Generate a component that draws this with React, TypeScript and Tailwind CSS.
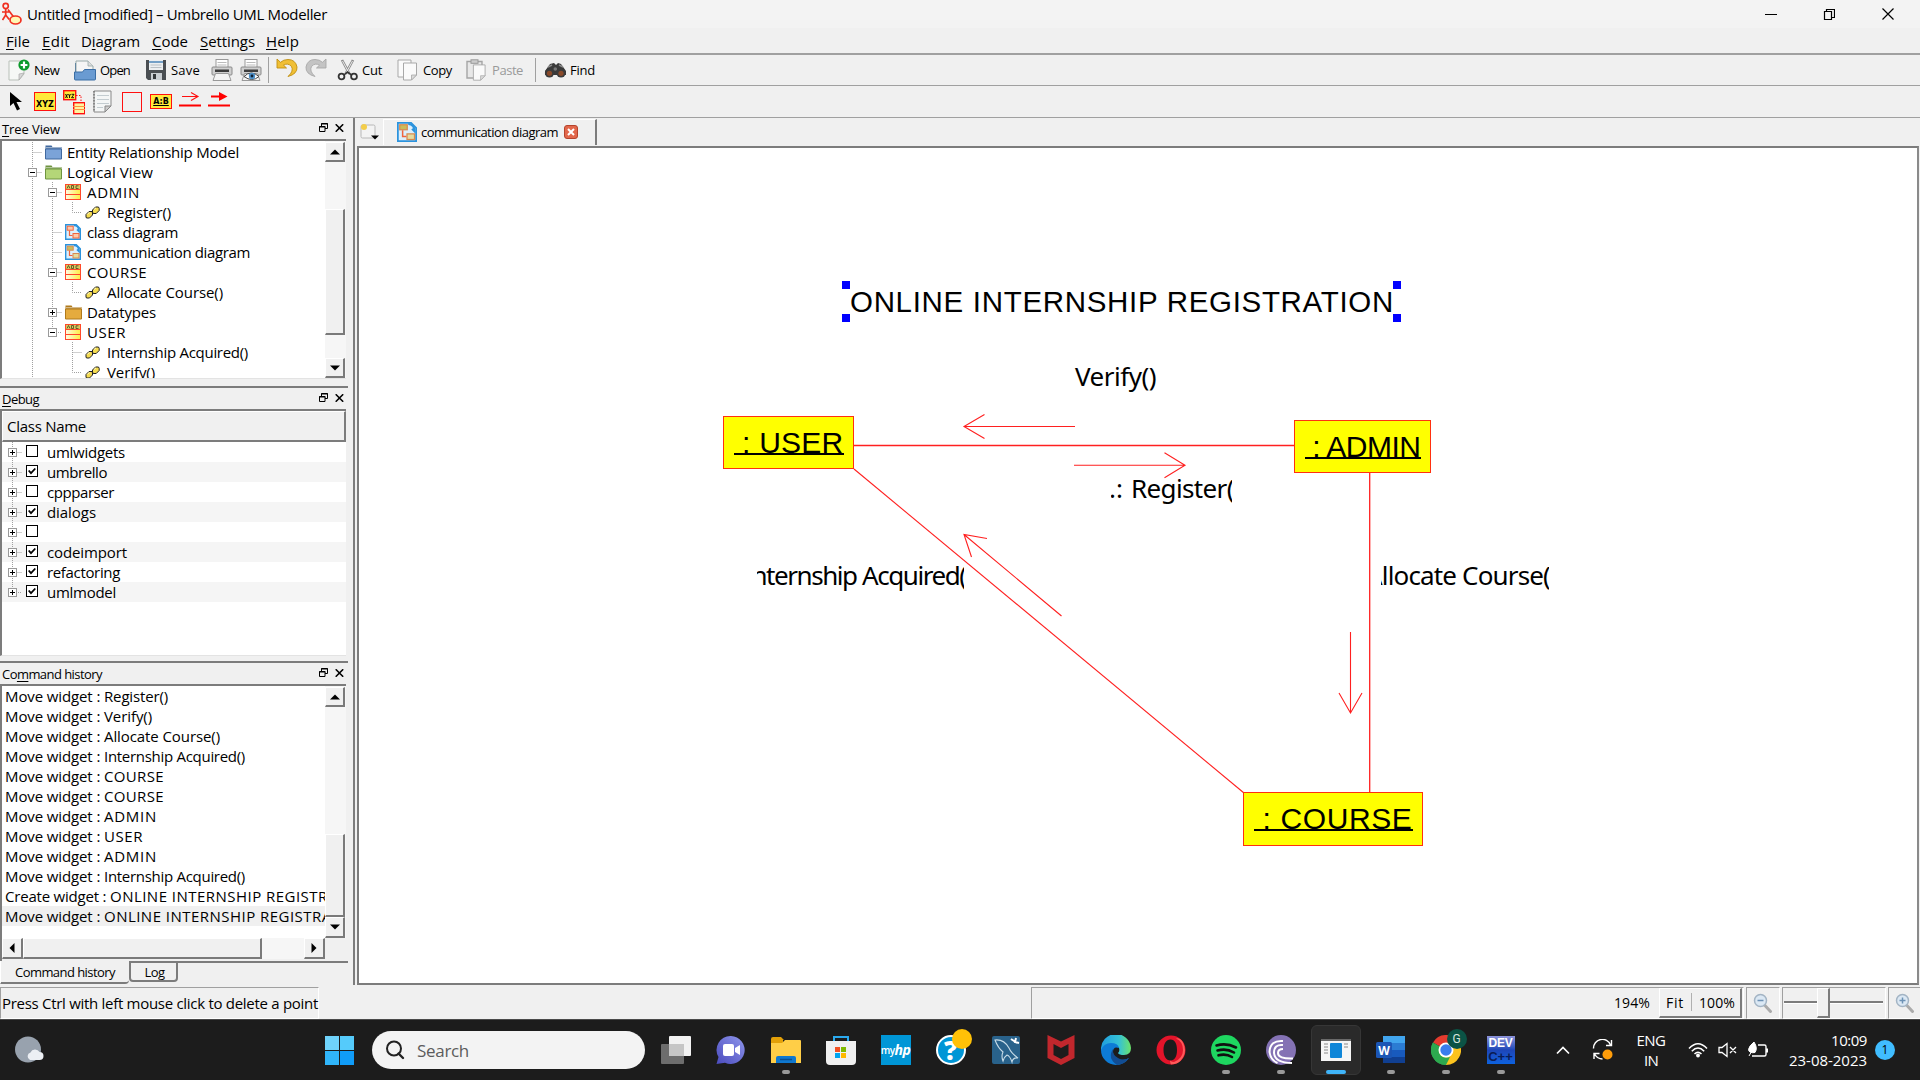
import React, { ReactNode, useLayoutEffect, useRef, useState } from "react";

/** Single-line text whose tracking is adjusted so it spans exactly `w` pixels. */
function Fit({ w, className = "", children }: { w: number; className?: string; children: ReactNode }) {
  const ref = useRef<HTMLSpanElement>(null);
  const [sp, setSp] = useState(0);
  useLayoutEffect(() => {
    const el = ref.current;
    if (!el) return;
    const n = (el.textContent || "").length;
    const natural = el.getBoundingClientRect().width;
    setSp((w - natural) / n);
  }, []);
  return (
    <span ref={ref} className={`inline-block whitespace-pre shrink-0 ${className}`} style={{ letterSpacing: sp }}>
      {children}
    </span>
  );
}

const U = ({ children }: { children: ReactNode }) => (
  <span className="underline decoration-1 underline-offset-2">{children}</span>
);

/* ---------- toolbar icons ---------- */
const Page = ({ x = 0, y = 0 }: { x?: number; y?: number }) => (
  <g transform={`translate(${x} ${y})`}>
    <path d="M1 1h13v12l-5 5H1z" fill="#fafafa" stroke="#a8a8a8" />
    <path d="M14 13H9v5z" fill="#dcdcdc" stroke="#a8a8a8" strokeWidth=".8" />
  </g>
);
const NewIcon = () => (
  <svg width="22" height="22" viewBox="0 0 22 22">
    <path d="M1 2h15v13l-5 6H1z" fill="#f6f8f6" stroke="#b9c0b9" />
    <path d="M16 14l-5 1v6z" fill="#d8d8d8" stroke="#aaa" strokeWidth=".7" />
    <circle cx="16" cy="6" r="5.600" fill="#0b9a2a" />
    <path d="M16 2.600v6.800M12.600 6h6.800" stroke="#fff" strokeWidth="2.200" />
  </svg>
);
const OpenIcon = () => (
  <svg width="22" height="22" viewBox="0 0 22 22">
    <path d="M1 4h5v14H1z" fill="#2f6296" />
    <path d="M2 2h12l5 5v9H2z" fill="#f5f5f5" stroke="#9aa" />
    <path d="M14 2v5h5" fill="#ddd" stroke="#9aa" strokeWidth=".8" />
    <path d="M.5 13h8l2-2.500h11V20a1 1 0 0 1-1 1H1.500a1 1 0 0 1-1-1z" fill="#6a9bd2" stroke="#3b6ea5" />
  </svg>
);
const SaveIcon = () => (
  <svg width="22" height="22" viewBox="0 0 22 22">
    <path d="M1 1h20v20H3l-2-2z" fill="#4a4e52" />
    <rect x="4" y="1" width="14" height="10" fill="#eceff1" />
    <path d="M4 3h14" stroke="#4d86b8" strokeWidth="1.500" />
    <path d="M5.500 6h11M5.500 8.500h11" stroke="#b9c0c5" />
    <rect x="6" y="14" width="11" height="7" fill="#c9ced2" />
    <rect x="8" y="15" width="3" height="5" fill="#33373a" />
  </svg>
);
const Printer = ({ eye = false }: { eye?: boolean }) => (
  <svg width="22" height="22" viewBox="0 0 22 22">
    <rect x="5" y=".5" width="12" height="9" fill="#fff" stroke="#999" />
    <path d="M6.500 3.500h9M6.500 6h9" stroke="#bbb" />
    <rect x="1" y="8" width="20" height="8" rx="1" fill="#cfcfcf" stroke="#8a8a8a" />
    <rect x="4" y="10.500" width="14" height="2.500" fill="#3d3d3d" />
    <path d="M4.500 14.500h13l2.500 7H2z" fill="#f4f4f4" stroke="#999" />
    {eye && (
      <g>
        <path d="M4 17.500q7-7 15 0q-7 6-15 0z" fill="#fff" stroke="#444" />
        <circle cx="12" cy="17" r="3.200" fill="#4b8fc9" />
        <circle cx="12" cy="17" r="1.400" fill="#123" />
      </g>
    )}
  </svg>
);
const Undo = ({ flip = false }: { flip?: boolean }) => (
  <svg width="22" height="22" viewBox="0 0 22 22" className={flip ? "-scale-x-100" : ""}>
    <path
      d="M1 2v9h9.500L7.500 8.200Q12 5.500 15.500 9.500Q18 14 12 19.500Q21.500 17 21 10Q19.500 2.500 12 2.500Q7.500 2.500 4.500 5.300z"
      fill={flip ? "#c4c4c4" : "#f0bf35"}
      stroke={flip ? "#a8a8a8" : "#bf8f10"}
      strokeWidth=".9"
    />
  </svg>
);
const CutIcon = () => (
  <svg width="22" height="22" viewBox="0 0 22 22">
    <path d="M5 1l7.500 14M16 1L8.500 15" stroke="#8b8b8b" strokeWidth="2.600" />
    <path d="M5.500 2l7 13M15.500 2l-7 13" stroke="#e8e8e8" strokeWidth="1" />
    <circle cx="4.500" cy="17.500" r="2.900" fill="none" stroke="#333" strokeWidth="1.800" />
    <circle cx="17" cy="17.500" r="2.900" fill="none" stroke="#333" strokeWidth="1.800" />
    <path d="M7 16l3.500-3 4 3" stroke="#333" strokeWidth="1.600" fill="none" />
  </svg>
);
const CopyIcon = () => (
  <svg width="22" height="22" viewBox="0 0 22 22">
    <Page />
    <Page x={5.5} y={3} />
  </svg>
);
const PasteIcon = () => (
  <svg width="22" height="22" viewBox="0 0 22 22">
    <path d="M1 2.500h15V19H1z" fill="#e8e8e8" stroke="#a5a5a5" strokeWidth="1.400" />
    <rect x="5" y=".8" width="7" height="3.500" fill="#ccc" stroke="#999" />
    <g transform="translate(6.500 5) scale(.9)">
      <Page />
    </g>
  </svg>
);
const FindIcon = () => (
  <svg width="23" height="20" viewBox="0 0 23 20">
    <path d="M6 4l4-1 2 2 2-2 3 1 5 7v4H1v-4z" fill="#3a3a3a" />
    <path d="M4 7l4-2M15 5l4 2" stroke="#8b8b8b" strokeWidth="1.500" />
    <circle cx="5.500" cy="13" r="4.600" fill="#3b3b3b" />
    <circle cx="5.500" cy="13.300" r="2.600" fill="#8a4a2a" />
    <circle cx="17" cy="13" r="4.600" fill="#3b3b3b" />
    <circle cx="17" cy="13.300" r="2.600" fill="#8a4a2a" />
    <circle cx="11.300" cy="9" r="1.800" fill="#777" />
  </svg>
);

/* ---------- tree icons ---------- */
const Folder = ({ c, d }: { c: string; d: string }) => (
  <svg width="17" height="16" viewBox="0 0 17 16" className="shrink-0">
    <path d="M.5 15V1.500h6l1 1.500h9V15z" fill={d} />
    <path d="M.5 5h16v10H.5z" fill={c} stroke={d} />
    <path d="M1 3.700h15" stroke="#fff" strokeOpacity=".6" />
  </svg>
);
const ClassIcon = () => (
  <svg width="16" height="16" viewBox="0 0 16 16" className="shrink-0">
    <defs>
      <linearGradient id="cls" x1="0" x2="1">
        <stop stopColor="#fffbe0" />
        <stop offset="1" stopColor="#fff048" />
      </linearGradient>
    </defs>
    <rect width="16" height="16" fill="#ff4a2a" />
    <rect x="1" y="1" width="14" height="4" fill="#d8c860" />
    <path d="M2 4.500l1.500-3 1.500 3M6.500 1.500v3h2v-3zM13.500 1.800h-2.500v2.700h2.500" fill="none" stroke="#4a4420" strokeWidth=".8" />
    <rect x="1" y="6" width="14" height="4" fill="url(#cls)" />
    <rect x="1" y="11" width="14" height="4" fill="url(#cls)" />
  </svg>
);
const DiagIcon = ({ s = 16, comm = false }: { s?: number; comm?: boolean }) => (
  <svg width={s} height={s} viewBox="0 0 16 16" className="shrink-0">
    <path d="M.7.7h10.600l4 4v10.600H.7z" fill="#dceffc" stroke="#2b93dd" strokeWidth="1.400" />
    <path d="M9 1.500q5 0 5 6l-2-2" fill="none" stroke="#2b93dd" strokeWidth="1.600" />
    <rect x="2.200" y="2.200" width="6" height="4" fill={comm ? "#c9bd5a" : "#ffc9a8"} stroke={comm ? "#d88a50" : "#f0643c"} />
    <rect x="8" y="9.500" width="6" height="4.500" fill={comm ? "#e4dca0" : "#ffc9a8"} stroke={comm ? "#d88a50" : "#f0643c"} />
    <path d="M4.500 6.500v5h3" fill="none" stroke="#f0643c" strokeWidth="1.200" />
  </svg>
);
const LinkIcon = () => (
  <svg width="15" height="13" viewBox="0 0 15 13" className="shrink-0">
    <path d="M1 8.500l3-3h3l.5 1.500v2l-3 3H1.500L1 11z" fill="#f5dc50" stroke="#222" strokeWidth="1" />
    <path d="M7.500 4l3-3h3l.7 1.500v2l-3 3h-3L7.500 6z" fill="#f5dc50" stroke="#222" strokeWidth="1" />
    <path d="M2.500 8l2-1.500M9 3.500l2-1.700" stroke="#fffbd0" />
  </svg>
);

const Expander = ({ plus = false }: { plus?: boolean }) => (
  <span className="z-10 flex h-[9px] w-[9px] shrink-0 items-center justify-center border border-[#9a9a9a] bg-white">
    <svg width="5" height="5" viewBox="0 0 5 5">
      <path d={plus ? "M0 2.500h5M2.500 0v5" : "M0 2.500h5"} stroke="#000" />
    </svg>
  </span>
);

type Row = { icon: string; t: string; w: number; ex?: string; guides: string[] };
const tree: Row[] = [
  { icon: "blue", t: "Entity Relationship Model", w: 172, guides: ["t"] },
  { icon: "green", t: "Logical View", w: 86, ex: "-", guides: ["t"] },
  { icon: "class", t: "ADMIN", w: 53, ex: "-", guides: ["v", "t"] },
  { icon: "link", t: "Register()", w: 64, guides: ["v", "v", "l"] },
  { icon: "diag", t: "class diagram", w: 91, guides: ["v", "t"] },
  { icon: "comm", t: "communication diagram", w: 163, guides: ["v", "t"] },
  { icon: "class", t: "COURSE", w: 60, ex: "-", guides: ["v", "t"] },
  { icon: "link", t: "Allocate Course()", w: 116, guides: ["v", "v", "l"] },
  { icon: "orange", t: "Datatypes", w: 69, ex: "+", guides: ["v", "t"] },
  { icon: "class", t: "USER", w: 39, ex: "-", guides: ["v", "l"] },
  { icon: "link", t: "Internship Acquired()", w: 141, guides: ["v", "", "t"] },
  { icon: "link", t: "Verify()", w: 48, guides: ["v", "", "l"] },
];

function Guide({ kind, ex }: { kind: string; ex?: string }) {
  return (
    <span className="relative flex h-5 w-5 shrink-0 items-center pl-1">
      {kind && (
        <svg width="20" height="20" viewBox="0 0 20 20" className="absolute top-0 left-0">
          <path
            d={kind === "v" ? "M8.500 0V20" : kind === "t" ? "M8.500 0V20M8.500 10.500H18" : "M8.500 0V10.500H18"}
            fill="none"
            stroke="#a0a0a0"
            strokeDasharray="1 1"
          />
        </svg>
      )}
      {ex && <Expander plus={ex === "+"} />}
    </span>
  );
}

function TreeIcon({ k }: { k: string }) {
  if (k === "blue") return <Folder c="#7ba3d8" d="#41699f" />;
  if (k === "green") return <Folder c="#b4d678" d="#6f9440" />;
  if (k === "orange") return <Folder c="#e5ab3e" d="#b07a1c" />;
  if (k === "class") return <ClassIcon />;
  if (k === "link") return <LinkIcon />;
  return <DiagIcon comm={k === "comm"} />;
}

const btn =
  "flex shrink-0 items-center justify-center bg-[#f0f0f0] border-t border-l border-t-white border-l-white border-r-2 border-b-2 border-r-[#7a7a7a] border-b-[#7a7a7a]";
const track = "bg-[#f6f6f6]";

const Tri = ({ d }: { d: string }) => (
  <svg width="10" height="10" viewBox="0 0 10 10">
    <path d={d} fill="#000" />
  </svg>
);
const UP = "M0 7.500h10L5 2.500z";
const DOWN = "M0 2.500h10L5 7.500z";
const LEFT = "M7.500 0v10l-5-5z";
const RIGHT = "M2.500 0v10l5-5z";

function DockTitle({ children, w }: { children: ReactNode; w: number }) {
  return (
    <div className="flex h-[21px] shrink-0 items-center pl-0.5 pr-[4px] text-[13px]">
      <Fit w={w}>{children}</Fit>
      <span className="grow" />
      <svg width="9" height="9" viewBox="0 0 9 9" className="mb-[2px] mr-[7px]">
        <path d="M2.500 3V.500h6v5H6M2 1h7M.5 3.500h5.500v5H.5zM0 4h6.500" fill="none" stroke="#000" />
      </svg>
      <svg width="9" height="8" viewBox="0 0 9 8" className="mb-[2px]">
        <path d="M.7.3l7.500 7.400M8.200.3L.7 7.700" stroke="#000" strokeWidth="1.600" />
      </svg>
    </div>
  );
}

const debugRows: [string, number, boolean][] = [
  ["umlwidgets", 78, false],
  ["umbrello", 60, true],
  ["cppparser", 67, false],
  ["dialogs", 49, true],
  ["", 0, false],
  ["codeimport", 80, true],
  ["refactoring", 73, true],
  ["umlmodel", 69, true],
];

const history: [string, number, string, number][] = [
  ["Move widget : ", 99, "Register()", 64],
  ["Move widget : ", 99, "Verify()", 48],
  ["Move widget : ", 99, "Allocate Course()", 116],
  ["Move widget : ", 99, "Internship Acquired()", 141],
  ["Move widget : ", 99, "COURSE", 60],
  ["Move widget : ", 99, "COURSE", 60],
  ["Move widget : ", 99, "ADMIN", 53],
  ["Move widget : ", 99, "USER", 39],
  ["Move widget : ", 99, "ADMIN", 53],
  ["Move widget : ", 99, "Internship Acquired()", 141],
  ["Create widget : ", 105, "ONLINE INTERNSHIP REGISTRATION", 265],
  ["Move widget : ", 99, "ONLINE INTERNSHIP REGISTRATION", 265],
];

function Sidebar() {
  return (
    <div className="flex h-[867px] w-[348px] shrink-0 flex-col">
      {/* Tree view */}
      <div className="flex h-[262px] shrink-0 flex-col">
        <DockTitle w={58}><U>T</U>ree View</DockTitle>
        <div className="mr-[2px] flex h-[240px] border-t-2 border-b border-l-2 border-t-[#7c7c7c] border-l-[#7c7c7c] border-b-[#e3e3e3] bg-white">
          <div className="h-[237px] grow overflow-hidden pt-px">
            {tree.map((r, i) => (
              <div key={i} className="flex h-5 items-center pl-[22px]">
                {r.guides.map((g, j) => (
                  <Guide key={j} kind={g} ex={j === r.guides.length - 1 ? r.ex : undefined} />
                ))}
                <span className="mr-[3px] flex w-[20px] shrink-0 items-center justify-start pl-px">
                  <TreeIcon k={r.icon} />
                </span>
                <Fit w={r.w}>{r.t}</Fit>
              </div>
            ))}
          </div>
          <div className={`flex w-[21px] shrink-0 flex-col pr-px pt-px ${track}`}>
            <span className={`${btn} h-[20px]`}><Tri d={UP} /></span>
            <span className="h-[47px]" />
            <span className={`${btn} h-[126px]`} />
            <span className="grow" />
            <span className={`${btn} h-[20px]`}><Tri d={DOWN} /></span>
          </div>
        </div>
      </div>
      <div className="mt-[6px] h-[2px] shrink-0 bg-[#7c7c7c]" />
      {/* Debug */}
      <div className="flex h-[268px] shrink-0 flex-col">
        <DockTitle w={37}><U>D</U>ebug</DockTitle>
        <div className="mr-[2px] flex grow flex-col border-t-2 border-l-2 border-b border-t-[#7c7c7c] border-l-[#7c7c7c] border-b-[#e3e3e3] bg-white">
          <div className="flex h-[31px] shrink-0 items-center border-t border-l border-r-2 border-b-2 border-t-white border-l-white border-r-[#7c7c7c] border-b-[#7c7c7c] bg-[#f0f0f0] pl-1">
            <Fit w={79}>Class Name</Fit>
          </div>
          {debugRows.map(([t, w, on], i) => (
            <div key={i} className={`flex h-5 shrink-0 items-center pl-[2px] ${i % 2 ? "bg-[#f5f5f5]" : ""}`}>
              <Guide kind={i === 7 ? "l" : "t"} ex="+" />
              <span className="mb-[2px] ml-[2px] mr-[9px] flex h-3 w-3 shrink-0 items-center justify-center border border-black bg-white">
                {on && (
                  <svg width="8" height="8" viewBox="0 0 8 8">
                    <path d="M.7 3.500l2.300 2.700L7.300 1.500" fill="none" stroke="#000" strokeWidth="1.800" />
                  </svg>
                )}
              </span>
              {t && <Fit w={w}>{t}</Fit>}
            </div>
          ))}
        </div>
      </div>
      <div className="mt-[5px] h-[2px] shrink-0 bg-[#7c7c7c]" />
      {/* Command history */}
      <div className="flex h-[298px] shrink-0 flex-col">
        <DockTitle w={100}>Co<U>m</U>mand history</DockTitle>
        <div className="mr-[2px] flex grow flex-col border-t-2 border-l-2 border-t-[#7c7c7c] border-l-[#7c7c7c] bg-white">
          <div className="flex h-[252px] shrink-0">
            <div className="w-[323px] shrink-0 overflow-hidden">
              {history.map(([p, pw, t, w], i) => (
                <div key={i} className={`flex h-5 items-center pl-[3px] ${i === 11 ? "bg-[#f0f0f0]" : ""}`}>
                  <Fit w={pw}>{p}</Fit>
                  <Fit w={w}>{t}</Fit>
                </div>
              ))}
            </div>
            <div className={`flex grow flex-col pt-px pr-px ${track}`}>
              <span className={`${btn} h-[20px]`}><Tri d={UP} /></span>
              <span className="grow" />
              <span className={`${btn} h-[83px]`} />
              <span className={`${btn} h-[21px]`}><Tri d={DOWN} /></span>
            </div>
          </div>
          <div className="flex h-[21px] shrink-0 bg-[#f0f0f0]">
            <div className={`flex w-[323px] ${track}`}>
              <span className={`${btn} w-[21px]`}><Tri d={LEFT} /></span>
              <span className={`${btn} w-[239px]`} />
              <span className="grow" />
              <span className={`${btn} w-[21px]`}><Tri d={RIGHT} /></span>
            </div>
          </div>
          <div className="h-px grow bg-[#f0f0f0]" />
        </div>
      </div>
      {/* Tabs */}
      <div className="flex h-[25px] shrink-0 items-start text-[13px]">
        <div className="flex h-[23px] w-[129px] items-center justify-center rounded-br-sm border-b-2 border-l border-b-[#7c7c7c] border-l-white">
          <Fit w={100}>Command history</Fit>
        </div>
        <div className="flex h-[21px] w-[49px] items-center justify-center rounded-b-sm border-2 border-[#7c7c7c] pl-[2px]">
          <Fit w={20}>Log</Fit>
        </div>
        <div className="h-[2px] grow bg-[#7c7c7c]" />
      </div>
    </div>
  );
}

function NodeBox({ className, label, w }: { className: string; label: string; w: number }) {
  return (
    <div className={`absolute flex justify-center border-[1.5px] border-[#ff3010] bg-[#ffff00] font-['Liberation_Sans'] text-[30px] ${className}`}>
      <span className="flex h-[38px] items-start border-b-2 border-black leading-[52px]">
        <Fit w={w}>{label}</Fit>
      </span>
    </div>
  );
}

function Handle({ className }: { className: string }) {
  return <span className={`absolute h-2 w-2 bg-[#0000ff] ${className}`} />;
}

/** Free canvas: widgets sit at their own diagram coordinates. */
function Canvas() {
  return (
    <div className="relative h-[835px] w-[1558px] overflow-hidden bg-white font-['Noto_Sans'] text-[26px] text-black">
      <svg viewBox="359 148 1559 835" width="1559" height="835" className="absolute top-0 left-0" fill="none" stroke="#ff2020" strokeWidth="1.100">
        <path d="M854 445.500H1294" strokeWidth="1.700" />
        <path d="M1075 426.500H964M984.500 414.500L964 426.500L984.500 438.500" />
        <path d="M1074 465.200H1185M1164.500 452.700L1185 465.200L1164.500 477.700" />
        <path d="M1369.700 472V793" strokeWidth="1.300" />
        <path d="M1350.500 632V713M1339 693L1350.500 713L1362 693" />
        <path d="M854 469L1244 793" />
        <path d="M1061.500 616L964 534.500M987 538.500L964 534.500L971.500 557" />
      </svg>
      <div className="absolute top-[132px] left-[491px] font-['Liberation_Sans'] text-[29.5px] leading-[44px]">
        <Fit w={544}>ONLINE INTERNSHIP REGISTRATION</Fit>
      </div>
      <Handle className="top-[133px] left-[483px]" />
      <Handle className="top-[133px] left-[1034px]" />
      <Handle className="top-[166px] left-[483px]" />
      <Handle className="top-[166px] left-[1034px]" />
      <div className="absolute top-[210px] left-[716px] leading-9"><Fit w={81}>Verify()</Fit></div>
      <div className="absolute top-[322px] left-[752px] flex w-[121px] overflow-hidden leading-9">
        <span className="-ml-[2px] w-[22px] shrink-0">.:</span>
        <Fit w={110}>Register()</Fit>
      </div>
      <div className="absolute top-[409px] left-[398px] flex w-[207px] overflow-hidden leading-9">
        <span className="-ml-[13px]"><Fit w={228}>Internship Acquired()</Fit></span>
      </div>
      <div className="absolute top-[409px] left-[1022px] flex w-[168px] overflow-hidden leading-9">
        <span className="-ml-[15px]"><Fit w={191}>Allocate Course()</Fit></span>
      </div>
      <NodeBox className="top-[268px] left-[364px] h-[53px] w-[131px]" label=" : USER" w={110} />
      <NodeBox className="top-[272px] left-[935px] h-[53px] w-[137px]" label=" : ADMIN" w={116} />
      <NodeBox className="top-[644px] left-[884px] h-[54px] w-[180px]" label=" : COURSE" w={159} />
    </div>
  );
}

/* ---------- taskbar ---------- */
const S = ({ children }: { children: ReactNode }) => (
  <svg width="30" height="30" viewBox="0 0 30 30">
    {children}
  </svg>
);
const apps: { el: ReactNode; run?: boolean; active?: boolean }[] = [
  { el: <S><rect x="8" y="1" width="22" height="20" rx="1" fill="#f2f2f2" /><rect y="9" width="23" height="20" rx="1" fill="#777" fillOpacity=".9" /><path d="M8 9h15v12H8z" fill="#c6c6c6" /></S> },
  { el: <S><defs><linearGradient id="ch" x1="0" x2="1" y1="1" y2="0"><stop stopColor="#4a4bbd" /><stop offset="1" stopColor="#8f96ec" /></linearGradient></defs><path d="M15 1a14 14 0 1 1-6 26.800L.5 29l2-7A14 14 0 0 1 15 1z" fill="url(#ch)" /><rect x="7" y="9" width="11" height="12" rx="2" fill="#fff" /><path d="M19 13l5-3v10l-5-3z" fill="#fff" /></S> },
  { el: <S><path d="M0 4a2 2 0 0 1 2-2h8l3 3h-1v6H0z" fill="#e3a008" /><path d="M0 8h11l3-3h15a1 1 0 0 1 1 1v22H0z" fill="#ffce47" /><path d="M5 28v-5a2 2 0 0 1 2-2h16a2 2 0 0 1 2 2v5z" fill="#0f78cf" /><path d="M9 24.500h12" stroke="#0a4f91" strokeWidth="1.500" /></S>, run: true },
  { el: <S><path d="M8 7V2h14v5" fill="none" stroke="#2aa9ee" strokeWidth="2" /><path d="M0 6h30v20a4 4 0 0 1-4 4H4a4 4 0 0 1-4-4z" fill="#f0f0f0" /><path d="M9 12h5v5H9z" fill="#f25022" /><path d="M15 12h5v5h-5z" fill="#7fba00" /><path d="M9 18h5v5H9z" fill="#00a4ef" /><path d="M15 18h5v5h-5z" fill="#ffb900" /></S> },
  { el: <div className="flex h-[30px] w-[30px] items-center justify-center bg-[#0096d6] font-['Open_Sans'] text-[10px] font-semibold tracking-tighter text-white"><span>my</span><span className="text-[14px] font-bold italic">hp</span></div> },
  { el: <div className="relative flex h-[30px] w-[30px] items-center justify-center rounded-full border-2 border-white bg-[#0096d6] font-['Open_Sans'] text-[26px] leading-none font-extrabold text-white">?<span className="absolute -top-[8px] -right-[8px] h-5 w-5 rounded-full bg-[#ffc107]" /></div> },
  { el: <S><rect x="1" y="1" width="28" height="28" rx="2" fill="#29628b" /><path d="M4 5q9-1 14 8 2 5 9 10-5-1-6 4-2-6-5-7-3 2-4 6-2-5 0-9-5-4-8-12z" fill="none" stroke="#c8dce8" strokeWidth="1.100" /><path d="M20 4l6 4M25 3l-1 4 4 1" stroke="#fff" strokeWidth="2" fill="none" /></S> },
  { el: <S><path d="M1.500 0L15 6.500 28.500 0v23L15 30 1.500 23zM7.500 9v11L15 24l7.500-4V9L15 13z" fill="#c1272d" fillRule="evenodd" /></S> },
  { el: <S><defs><linearGradient id="ed" x1="0" x2="1"><stop stopColor="#1f9de0" /><stop offset=".6" stopColor="#35c1d5" /><stop offset="1" stopColor="#6be36a" /></linearGradient></defs><path d="M0 15A15 15 0 0 1 30 13q0 7-7 7-5 0-6-2 2-2 1-5-3-5-9-3-6 1-9 6z" fill="url(#ed)" /><path d="M0 15q3-7 10-7 7 0 8 5-6-2-6 4 0 8 9 8 4 0 7-2-5 7-13 7A15 15 0 0 1 0 15z" fill="#0d7bd6" /><path d="M12 14q-6 9 4 16 8-1 12-7-6 3-11 0-6-3-5-9z" fill="#124d93" /></S> },
  { el: <S><path fillRule="evenodd" d="M15 .5a14.500 14.500 0 1 1 0 29 14.500 14.500 0 0 1 0-29zM14.500 4.500C10 4.500 7.500 9 7.500 15s2.500 10.500 7 10.500 6.500-4.500 6.500-10.500-2-10.500-6.500-10.500z" fill="#e3142a" /><path d="M15 29.500q8 0 12-7t0-15q-3-5-7-4 7 3 7 11.500T18 27q-2 0-4-1.500.5 4 1 4z" fill="#ff5a5a" /></S> },
  { el: <S><circle cx="15" cy="15" r="15" fill="#1ed760" /><path d="M5.500 10.500q10-3 19.500 2M6.500 15.500q9-2.500 16.500 2M7.500 20.300q7.500-2 13.500 1.700" fill="none" stroke="#101010" strokeWidth="2.600" strokeLinecap="round" /></S>, run: true },
  { el: <S><circle cx="15" cy="15" r="15" fill="#8472b4" /><path d="M17 6Q4 5 3.500 17M17 10Q8 9 8 18q1 10 18 10M17 14q-5 0-5 4 0 6 15 5.500M3.500 17q1 8 8 11" fill="none" stroke="#fff" strokeWidth="2" /></S>, run: true },
  { el: <S><rect y="4" width="30" height="22" fill="#f5f5f5" /><path d="M0 4h30v2H0z" fill="#6a6a6a" /><rect x="9" y="8" width="12" height="15" rx="1" fill="#0f86d8" /><path d="M3 9h4M3 12h4M3 15h4M3 18h4M23 9h4M23 12h4" stroke="#888" /></S>, active: true },
  { el: <S><path d="M7 1h22v7H7z" fill="#41a5ee" /><path d="M7 8h22v7H7z" fill="#2b7cd3" /><path d="M7 15h22v7H7z" fill="#185abd" /><path d="M7 22h22v6H7z" fill="#103f91" /><rect y="7" width="16" height="16" rx="1.500" fill="#1b56b5" /><text x="8" y="19.500" textAnchor="middle" fontSize="12" fontWeight="700" fill="#fff" fontFamily="Open Sans">W</text></S>, run: true },
  { el: <div className="relative h-[30px] w-[30px]"><S><path d="M15 15L2 7.500a15 15 0 0 1 26 0z" fill="#e33b2e" /><path d="M15 15L2 7.500A15 15 0 0 0 15 30z" fill="#2da94f" /><path d="M15 15L28 7.500A15 15 0 0 1 15 30z" fill="#fcc31e" /><path d="M15 30l7-11-7-4-8 2z" fill="#fcc31e" /><path d="M2 7.500L9 19q2 5 10 3l-4 8A15 15 0 0 1 2 7.500z" fill="#2da94f" /><circle cx="15" cy="15" r="7.500" fill="#fff" /><circle cx="15" cy="15" r="5.700" fill="#3b7ded" /></S><span className="absolute -top-[6px] left-[16px] flex h-5 w-5 items-center justify-center rounded-full bg-[#0b5345] font-['Roboto'] text-[12px] text-[#d5e5df]">G</span></div>, run: true },
  { el: <div className="flex h-7 w-7 flex-col items-center justify-center bg-gradient-to-b from-[#8d93d9] via-[#1d46b8] to-[#0b62df] font-['Liberation_Sans'] font-bold"><span className="text-[12px] leading-[14px] tracking-tight text-white">DEV</span><span className="text-[13px] leading-[14px] text-[#0a1c55]">C++</span></div>, run: true },
];

function Taskbar() {
  return (
    <div className="flex h-[60px] items-center bg-[#1c1c1c] font-['Open_Sans'] text-white">
      <svg width="29" height="28" viewBox="0 0 29 28" className="ml-[15px]">
        <circle cx="13" cy="13.500" r="13" fill="#98a2ae" />
        <path d="M15 24a4 4 0 0 1 .5-7.500 5 5 0 0 1 9-.5 4 4 0 0 1 0 8z" fill="#eceff4" />
      </svg>
      <div className="ml-[281px] grid h-[29px] w-[29px] grid-cols-2 gap-px">
        <span className="bg-[#6fd3fb]" />
        <span className="bg-[#55cbfb]" />
        <span className="bg-[#30b5fa]" />
        <span className="bg-[#109cf8]" />
      </div>
      <div className="ml-[18px] flex h-[38px] w-[273px] shrink-0 items-center rounded-full bg-[#f3f3f3] pl-[13px] text-[17px] text-[#5c5c5c]">
        <svg width="20" height="20" viewBox="0 0 20 20" className="mr-[12px]">
          <circle cx="9" cy="8.500" r="7" fill="none" stroke="#222" strokeWidth="2" />
          <path d="M13.500 13.500l4.500 4.500" stroke="#222" strokeWidth="2.400" strokeLinecap="round" />
        </svg>
        <Fit w={52} className="mt-px">Search</Fit>
      </div>
      <div className="ml-[3px] flex h-[60px]">
        {apps.map((a, i) => (
          <div key={i} className="flex w-[55px] justify-center">
            <div className={`relative mt-[5px] flex h-[50px] w-[50px] items-center justify-center rounded-md ${a.active ? "border border-[#363636] bg-[#2a2a2a]" : ""}`}>
              {a.el}
              {a.run && <span className="absolute bottom-px left-[21px] h-1 w-2 rounded-full bg-[#999]" />}
              {a.active && <span className="absolute bottom-0 left-[14px] h-1 w-5 rounded-full bg-[#3fb4f8]" />}
            </div>
          </div>
        ))}
      </div>
      <svg width="14" height="9" viewBox="0 0 14 9" className="ml-[28px]">
        <path d="M1 7.500l6-6 6 6" fill="none" stroke="#fff" strokeWidth="1.700" />
      </svg>
      <svg width="22" height="22" viewBox="0 0 22 22" className="ml-[22px]">
        <path d="M1.500 9.500A8.800 8.800 0 0 1 18.500 6M19.500 1v5.500H14M2 20v-5.500h5.500M2.500 15q3 5 8 5" fill="none" stroke="#fff" strokeWidth="1.400" />
        <circle cx="15.500" cy="15.500" r="5" fill="#ff9d0a" />
      </svg>
      <div className="ml-[20px] flex w-[34px] flex-col items-center text-[15px] leading-5">
        <Fit w={29}>ENG</Fit>
        <Fit w={14}>IN</Fit>
      </div>
      <svg width="20" height="16" viewBox="0 0 20 16" className="ml-[20px]">
        <path d="M1 6.500q9-9.500 18 0M3.800 9.300q6.200-6.500 12.400 0M6.500 12q3.500-3.500 7 0" fill="none" stroke="#fff" strokeWidth="1.500" />
        <circle cx="10" cy="13.500" r="1.900" fill="#fff" />
      </svg>
      <svg width="20" height="16" viewBox="0 0 20 16" className="ml-[10px]">
        <path d="M1 5.500h3l5-4v13l-5-4H1zM12 5l6 6M18 5l-6 6" fill="none" stroke="#fff" strokeWidth="1.300" />
      </svg>
      <svg width="21" height="18" viewBox="0 0 21 18" className="ml-[10px]">
        <path d="M10 4h6.500a1.500 1.500 0 0 1 1.500 1.500v8a1.500 1.500 0 0 1-1.500 1.500H4" fill="none" stroke="#fff" strokeWidth="1.400" />
        <path d="M19 7.500v4" stroke="#fff" strokeWidth="2" />
        <path d="M6 1q4 6 1 10.500-6 1-6.500-3Q1 5 6 1zM1 15l4-7" fill="#fff" stroke="#fff" />
      </svg>
      <div className="ml-[19px] flex w-[79px] flex-col items-end text-[15px] leading-5">
        <Fit w={36}>10:09</Fit>
        <Fit w={78}>23-08-2023</Fit>
      </div>
      <span className="ml-[8px] flex h-5 w-5 items-center justify-center rounded-full bg-[#40bdff] text-[12px] text-black">1</span>
    </div>
  );
}

const Cell = ({ className, children }: { className: string; children?: ReactNode }) => (
  <div className={`flex h-[32px] shrink-0 items-center border-t border-l border-r border-b border-t-[#a0a0a0] border-l-[#a0a0a0] border-r-white border-b-white ${className}`}>
    {children}
  </div>
);
const Mag = ({ plus = false }: { plus?: boolean }) => (
  <svg width="20" height="20" viewBox="0 0 20 20">
    <path d="M11.500 12l6 6.500" stroke="#ababab" strokeWidth="3" strokeLinecap="round" />
    <circle cx="7.500" cy="7.500" r="6" fill="#dbe8f4" stroke="#a3b4c4" strokeWidth="1.500" />
    <path d={plus ? "M4.500 7.500h6M7.500 4.500v6" : "M4.500 7.500h6"} stroke="#6d92b5" strokeWidth="1.500" />
  </svg>
);

function TitleBar() {
  return (
    <div className="flex h-[28px] shrink-0 items-center bg-[#f3f3f3]">
      <svg width="20" height="24" viewBox="0 0 20 24" className="ml-[2px] mr-[5px]">
        <g fill="none" stroke="#f03020" strokeWidth="1.700">
          <circle cx="3.700" cy="4" r="2.600" />
          <path d="M3.700 7v6M0 10h8M3.700 13L.5 18M3.700 13l3.500 4.500M6 7.500l6 8" />
          <ellipse cx="13.500" cy="18" rx="5.500" ry="4" fill="#fff7b5" />
        </g>
      </svg>
      <Fit w={300} className="text-[15px]">Untitled [modified] – Umbrello UML Modeller</Fit>
      <span className="grow" />
      <svg width="12" height="12" viewBox="0 0 12 12" className="mr-[46px]"><path d="M0 6.500h12" stroke="#000" /></svg>
      <svg width="12" height="12" viewBox="0 0 12 12" className="mr-[47px]">
        <path d="M1.500 3.500h7v8h-7zM3.500 3.500v-2h8v8h-3" fill="none" stroke="#000" strokeWidth="1.200" />
      </svg>
      <svg width="12" height="12" viewBox="0 0 12 12" className="mr-[26px]"><path d="M.5.5l11 11M11.500.5l-11 11" stroke="#000" strokeWidth="1.200" /></svg>
    </div>
  );
}

function MenuBar() {
  return (
    <div className="flex h-[27px] shrink-0 items-center border-b-2 border-[#a0a0a0] pl-[6px]">
      <Fit w={24} className="mr-[12px]"><U>F</U>ile</Fit>
      <Fit w={28} className="mr-[11px]"><U>E</U>dit</Fit>
      <Fit w={59} className="mr-[12px]">D<U>i</U>agram</Fit>
      <Fit w={36} className="mr-[12px]"><U>C</U>ode</Fit>
      <Fit w={55} className="mr-[11px]"><U>S</U>ettings</Fit>
      <Fit w={33}><U>H</U>elp</Fit>
    </div>
  );
}

function ToolBar() {
  return (
    <div className="flex h-[31px] shrink-0 items-center border-b border-[#a0a0a0] pl-[8px] text-[13px]">
      <NewIcon /><Fit w={25} className="ml-[4px] mr-[15px]">New</Fit>
      <OpenIcon /><Fit w={30} className="ml-[4px] mr-[15px]">Open</Fit>
      <SaveIcon /><Fit w={29} className="ml-[4px] mr-[11px]">Save</Fit>
      <span className="mr-[7px]"><Printer /></span>
      <Printer eye />
      <span className="ml-[6px] mr-[7px] h-[26px] w-px bg-[#a0a0a0]" />
      <span className="mb-1 mr-[7px]"><Undo /></span>
      <span className="mb-1 mr-[10px]"><Undo flip /></span>
      <CutIcon /><Fit w={20} className="ml-[3px] mr-[15px]">Cut</Fit>
      <CopyIcon /><Fit w={29} className="ml-[4px] mr-[14px]">Copy</Fit>
      <PasteIcon /><Fit w={31} className="ml-[4px] text-[#9a9a9a]">Paste</Fit>
      <span className="ml-[12px] mr-[8px] h-[24px] w-px bg-[#a0a0a0]" />
      <FindIcon /><Fit w={25} className="ml-[3px]">Find</Fit>
    </div>
  );
}

function DiagramTools() {
  return (
    <div className="flex h-[32px] shrink-0 items-center border-b border-[#a0a0a0] pl-[9px]">
      <svg width="15" height="19" viewBox="0 0 15 19" className="mr-[10px]"><path d="M1 0v14l3.500-3L8 18.500l3-1.500-3.500-7H13z" fill="#000" /></svg>
      <span className="flex h-[19px] w-[22px] items-end justify-center border-[1.500px] border-[#ff1010] bg-[#ffe93b] font-['DejaVu_Sans'] text-[8px] leading-[11px] font-bold text-black">XYZ</span>
      <svg width="22" height="26" viewBox="0 0 22 26" className="ml-[7px]">
        <rect x=".7" y="1.700" width="12" height="9" fill="#ffe93b" stroke="#ff1010" strokeWidth="1.400" />
        <path d="M2.500 5l2 4M4.500 5l-2 4M5.500 5l1 2 1-2M6.500 7v2M8.500 5.300h2.500L8.500 8.700H11" stroke="#000" strokeWidth=".9" fill="none" />
        <path d="M13 6.500h5V13" fill="none" stroke="#ff1010" strokeDasharray="1.500 1.500" />
        <rect x="10.700" y="13.700" width="11" height="11" fill="#fff4a0" stroke="#ff1010" strokeWidth="1.400" />
        <path d="M10 17.500h12M10 20.500h12" stroke="#ff9040" />
      </svg>
      <svg width="20" height="24" viewBox="0 0 20 24" className="ml-[8px]">
        <path d="M1 1h17v15l-6 6H1z" fill="#f4f6f6" stroke="#888" />
        <path d="M1 1v21" stroke="#777" strokeWidth="1.500" strokeDasharray="1.500 1.500" />
        <path d="M4 5.500h12M4 9.500h12M4 13.500h12M4 17.500h6" stroke="#c3ccd0" />
        <path d="M18 16h-6v6z" fill="#ccc" stroke="#888" />
      </svg>
      <span className="ml-[9px] h-5 w-5 border border-[#ff1010]" />
      <span className="ml-[8px] flex h-[15px] w-[22px] items-center justify-center border-[1.500px] border-[#ff1010] bg-[#ffe93b] font-['DejaVu_Sans'] text-[8px] font-bold text-black underline">A:B</span>
      <svg width="22" height="16" viewBox="0 0 22 16" className="mb-[5px] ml-[7px]"><path d="M3 5.500h16M12 1.500l7 4-7 4" fill="none" stroke="#ff1010" strokeWidth="1.100" /><path d="M0 14.500h22" stroke="#f00" strokeWidth="2" /></svg>
      <svg width="22" height="16" viewBox="0 0 22 16" className="mb-[5px] ml-[7px]"><path d="M3 5.500h10" stroke="#f00" strokeWidth="2" /><path d="M11 1l8.500 4.500L11 10z" fill="#f00" /><path d="M0 14.500h22" stroke="#f00" strokeWidth="2" /></svg>
    </div>
  );
}

function Workspace() {
  return (
    <div className="ml-[5px] flex h-[867px] w-[1566px] flex-col border-l-2 border-[#7c7c7c] pl-[2px]">
      <div className="flex h-[28px] shrink-0 items-center pb-px text-[13px]">
        <svg width="20" height="20" viewBox="0 0 20 20" className="ml-[2px]">
          <rect x="2" y="3" width="14" height="13" rx="1.500" fill="#f3f3f3" stroke="#b8b8b8" />
          <circle cx="5" cy="5" r="3" fill="#f3cd4a" />
          <path d="M12 13.500h8l-4 4z" fill="#000" />
        </svg>
        <div className="ml-[4px] flex h-[26px] w-[214px] items-center border-t border-l border-r-2 border-t-white border-l-white border-r-[#7c7c7c] pl-[13px]">
          <DiagIcon s={20} comm />
          <Fit w={137} className="ml-[4px] mr-[6px]">communication diagram</Fit>
          <span className="flex h-[14px] w-[14px] items-center justify-center rounded-[3px] border border-[#b5432c] bg-[#e2674b]">
            <svg width="8" height="8" viewBox="0 0 8 8"><path d="M1 1l6 6M7 1L1 7" stroke="#fff" strokeWidth="2" /></svg>
          </span>
        </div>
      </div>
      <div className="w-[1562px] border-2 border-[#7c7c7c] border-r-[#8a8a8a]">
        <Canvas />
      </div>
    </div>
  );
}

function StatusBar() {
  return (
    <div className="flex h-[34px] shrink-0 items-center pt-px">
      <Cell className="w-[319px] pl-px"><Fit w={316}>Press Ctrl with left mouse click to delete a point</Fit></Cell>
      <Cell className="ml-[712px] w-[713px] pl-[582px] text-[14px]">
        <Fit w={36} className="mt-px">194%</Fit>
        <div className="ml-[9px] flex h-[30px] w-[83px] items-center border-t border-l border-r-2 border-b-2 border-t-white border-l-white border-r-[#7c7c7c] border-b-[#7c7c7c] pl-[6px]">
          <Fit w={18} className="mt-px">Fit</Fit>
          <span className="ml-[7px] mr-[7px] h-[18px] w-px bg-[#b0b0b0]" />
          <Fit w={36} className="mt-px">100%</Fit>
        </div>
      </Cell>
      <Cell className="ml-[2px] w-[34px] justify-center"><Mag /></Cell>
      <Cell className="ml-[2px] w-[104px] pl-px">
        <span className="h-[3px] w-[33px] border-b border-b-white bg-[#7c7c7c]" />
        <span className="h-[30px] w-[13px] border-t border-l border-r-2 border-b-2 border-t-white border-l-white border-r-[#7c7c7c] border-b-[#7c7c7c]" />
        <span className="h-[3px] w-[53px] border-b border-b-white bg-[#7c7c7c]" />
      </Cell>
      <Cell className="ml-[2px] w-[34px] pl-[6px]"><Mag plus /></Cell>
    </div>
  );
}

export default function App() {
  return (
    <div className="flex h-[1080px] w-[1920px] flex-col overflow-hidden bg-[#f0f0f0] font-['Open_Sans','Noto_Sans',sans-serif] text-[15px] leading-5 text-black">
      <TitleBar />
      <MenuBar />
      <ToolBar />
      <DiagramTools />
      <div className="flex h-[867px] shrink-0">
        <Sidebar />
        <Workspace />
      </div>
      <StatusBar />
      <div className="h-px shrink-0 bg-[#4a4a4a]" />
      <Taskbar />
    </div>
  );
}
